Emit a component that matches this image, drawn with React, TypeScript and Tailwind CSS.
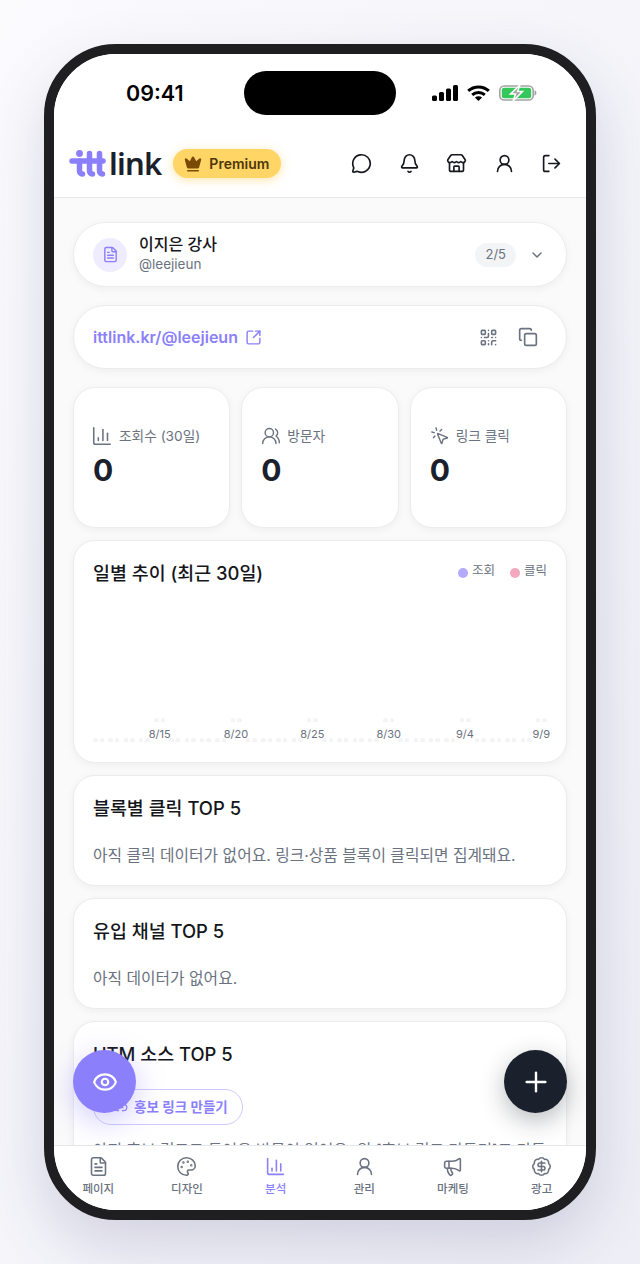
import {
  MessageCircle,
  Bell,
  Store,
  UserRound,
  LogOut,
  FileText,
  ChevronDown,
  SquareArrowOutUpRight,
  QrCode,
  Copy,
  ChartColumn,
  UsersRound,
  MousePointerClick,
  Eye,
  Plus,
  Palette,
  Megaphone,
  BadgeDollarSign,
  Crown,
  Link2,
} from "lucide-react";

const days = Array.from({ length: 30 }, (_, i) => {
  const d = new Date(2025, 7, 11 + i);
  return { label: i % 5 === 4 ? `${d.getMonth() + 1}/${d.getDate()}` : null };
});

const navItems = [
  { label: "페이지", Icon: FileText },
  { label: "디자인", Icon: Palette },
  { label: "분석", Icon: ChartColumn, active: true },
  { label: "관리", Icon: UserRound },
  { label: "마케팅", Icon: Megaphone },
  { label: "광고", Icon: BadgeDollarSign },
];

const stats = [
  { label: "조회수 (30일)", Icon: ChartColumn, iconClass: "-ml-[2px] h-[22px] w-[22px]" },
  { label: "방문자", Icon: UsersRound, iconClass: "h-[20px] w-[20px]" },
  { label: "링크 클릭", Icon: MousePointerClick, iconClass: "h-[20px] w-[20px]" },
];

const cardClass = "bg-white border border-[#ececee] shadow-[0_2px_8px_rgba(17,24,39,0.05)]";
const titleClass = "text-[18.4px] leading-[28px] font-medium text-[#14161a]";
const bodyClass = "text-[15.8px] leading-[22px] text-[#6b7280]";

function StatusIcons() {
  return (
    <div className="flex items-center gap-[9px]">
      <svg width="26" height="16" viewBox="0 0 26 16" fill="#000">
        <rect x="0" y="10.500" width="5" height="5.500" rx="1.500" />
        <rect x="7" y="7" width="5" height="9" rx="1.500" />
        <rect x="14" y="3.500" width="5" height="12.500" rx="1.500" />
        <rect x="21" y="0" width="5" height="16" rx="1.500" />
      </svg>
      <svg width="23" height="16" viewBox="0 0 23 16" fill="none" stroke="#000" strokeWidth="3">
        <path d="M1.200 5.800C7 0.600 16 0.600 21.800 5.800" />
        <path d="M5.200 9.800C8.800 6.600 14.200 6.600 17.800 9.800" />
        <path d="M11.500 16l-3.600-3.600c2-1.700 5.200-1.700 7.200 0z" fill="#000" stroke="none" />
      </svg>
      <svg width="38" height="16" viewBox="0 0 38 16" fill="none">
        <rect x="0.800" y="1" width="33.400" height="14" rx="4.500" stroke="#a3a3a3" strokeWidth="1.600" />
        <rect x="2.800" y="2.800" width="29.400" height="10.400" rx="2.500" fill="#34c759" />
        <path d="M35.500 5.500c1.300.3 1.900 1.200 1.900 2.500s-.6 2.200-1.900 2.500z" fill="#a3a3a3" />
        <path d="M21 0L11.500 9h5L14 16l9.500-9.500h-5z" fill="#a3a3a3" stroke="#fff" strokeWidth="1.500" />
      </svg>
    </div>
  );
}

function Logo() {
  return (
    <div className="flex items-center gap-[3px]">
      <svg width="37" height="27" viewBox="0 0 37 27" fill="none" stroke="#8b7ffb" strokeWidth="5.500" strokeLinecap="round" strokeLinejoin="round">
        <circle cx="10.500" cy="3.500" r="3.400" fill="#8b7ffb" stroke="none" />
        <path d="M3 11h7.500v9.500c0 2 1 3.500 3 3.500" />
        <path d="M20.500 3.500v17c0 2 1 3.500 3 3.500" />
        <path d="M30.500 3.500v17c0 2 1 3.500 3 3.500" />
        <path d="M10.500 11H34" />
      </svg>
      <span className="text-[31px] leading-none font-semibold tracking-[-0.8px] text-[#1a202c] font-['Noto_Sans','Inter',sans-serif]">link</span>
    </div>
  );
}

export default function App() {
  return (
    <div className="h-[1264px] w-[640px] overflow-hidden bg-gradient-to-br from-[#fbfbfe] to-[#eeeef6] pt-[44px] pl-[44px] font-['Inter','Noto_Sans_CJK_KR',sans-serif]">
      <div className="relative flex h-[1176px] w-[552px] flex-col overflow-hidden rounded-[72px] border-[10px] border-[#1f1f22] bg-white shadow-[0_24px_60px_rgba(60,55,110,0.18)]">
        {/* status bar */}
        <div className="relative flex h-[76px] flex-none items-start justify-between bg-white pt-[24px] pr-[49px] pl-[72px]">
          <span className="text-[21.500px] leading-[30px] font-semibold text-black">09:41</span>
          <div className="absolute top-[17px] left-[190px] h-[44px] w-[152px] rounded-full bg-black" />
          <div className="pt-[7px]">
            <StatusIcons />
          </div>
        </div>

        {/* header */}
        <header className="flex h-[68px] flex-none items-center justify-between border-b border-[#e5e7eb] bg-white pr-[24px] pl-[15px]">
          <div className="flex items-center gap-[12px]">
            <Logo />
            <div className="flex h-[29px] items-center gap-[7px] rounded-full bg-[#ffd566] pr-[12px] pl-[11px] shadow-[0_2px_10px_rgba(255,205,90,0.5)]">
              <Crown className="h-[18px] w-[18px] fill-[#7a4a06] text-[#7a4a06]" strokeWidth={2} />
              <span className="text-[14px] font-semibold text-[#4e3508]">Premium</span>
            </div>
          </div>
          <div className="flex items-center gap-[26.500px] text-[#16181d]">
            <MessageCircle className="h-[21px] w-[21px]" strokeWidth={1.900} />
            <Bell className="h-[21px] w-[21px]" strokeWidth={1.900} />
            <Store className="h-[21px] w-[21px]" strokeWidth={1.900} />
            <UserRound className="h-[21px] w-[21px]" strokeWidth={1.900} />
            <LogOut className="h-[21px] w-[21px]" strokeWidth={1.900} />
          </div>
        </header>

        {/* scrolling content */}
        <main className="flex min-h-0 flex-1 flex-col gap-[12px] overflow-hidden bg-[#fafafa] px-[19px] pt-[24px]">
          <div className={`${cardClass} mb-[6px] flex h-[65px] flex-none items-center rounded-full pr-[21px] pl-[19px]`}>
            <div className="flex h-[34px] w-[34px] flex-none items-center justify-center rounded-full bg-[#efecff]">
              <FileText className="h-[17px] w-[17px] text-[#8b7ffb]" strokeWidth={2} />
            </div>
            <div className="ml-[12px] flex min-w-0 flex-1 flex-col pb-[2px]">
              <span className="text-[16px] leading-[21px] font-medium text-[#14161a]">이지은 강사</span>
              <span className="text-[13.500px] leading-[19px] text-[#6b7280]">@leejieun</span>
            </div>
            <span className="flex h-[24px] items-center rounded-full bg-[#f3f4f6] px-[10px] text-[13px] text-[#6b7280]">2/5</span>
            <ChevronDown className="ml-[13px] h-[16px] w-[16px] text-[#6b7280]" strokeWidth={2.200} />
          </div>

          <div className={`${cardClass} mb-[6px] flex h-[64px] flex-none items-center rounded-full pr-[28px] pl-[19px]`}>
            <span className="text-[16px] font-semibold text-[#8b7ffb]">ittlink.kr/@leejieun</span>
            <SquareArrowOutUpRight className="ml-[7px] h-[17px] w-[17px] text-[#8b7ffb]" strokeWidth={2} />
            <div className="ml-auto flex items-center gap-[20px] text-[#6b7280]">
              <QrCode className="h-[19px] w-[19px]" strokeWidth={2} />
              <Copy className="h-[20px] w-[20px]" strokeWidth={2} />
            </div>
          </div>

          <div className="grid h-[141px] flex-none grid-cols-3 gap-[11px]">
            {stats.map(({ label, Icon, iconClass }) => (
              <div key={label} className={`${cardClass} flex flex-col rounded-[22px] pt-[38px] pl-[19px]`}>
                <div className="flex h-[20px] items-center gap-[6px] text-[#6b7280]">
                  <Icon className={iconClass} strokeWidth={1.700} />
                  <span className="text-[13.700px] leading-[20px]">{label}</span>
                </div>
                <span className="mt-[6px] text-[30px] leading-[36px] font-bold text-[#1a202c]">0</span>
              </div>
            ))}
          </div>

          <div className={`${cardClass} flex h-[223px] flex-none flex-col rounded-[22px] px-[19px] pt-[18px] pb-[20px]`}>
            <div className="flex items-center justify-between">
              <h3 className={titleClass}>일별 추이 (최근 30일)</h3>
              <div className="-mt-[4px] flex items-center gap-[15px] text-[12.500px] text-[#6b7280]">
                <span className="flex items-center gap-[4px]">
                  <span className="mt-[3px] h-[10px] w-[10px] rounded-full bg-[#b3aafc]" />
                  조회
                </span>
                <span className="flex items-center gap-[4px]">
                  <span className="mt-[3px] h-[10px] w-[10px] rounded-full bg-[#f3a8c0]" />
                  클릭
                </span>
              </div>
            </div>
            <div className="-mx-[2px] mt-auto flex items-end">
              {days.map((day, i) => (
                <div key={i} className="flex flex-1 flex-col items-center">
                  <div className="flex gap-[2px]">
                    <span className="h-[4px] w-[4.500px] rounded-t-full bg-[#f3f4f5]" />
                    <span className="h-[4px] w-[4.500px] rounded-t-full bg-[#f3f4f5]" />
                  </div>
                  {day.label && (
                    <span className="mt-[4px] flex h-[16px] w-0 justify-center text-[11px] leading-[16px] whitespace-nowrap text-[#6b7280]">
                      {day.label}
                    </span>
                  )}
                </div>
              ))}
            </div>
          </div>

          <div className={`${cardClass} flex h-[111px] flex-none flex-col rounded-[22px] px-[19px] pt-[18px]`}>
            <h3 className={titleClass}>블록별 클릭 TOP 5</h3>
            <p className={`mt-[23px] whitespace-nowrap ${bodyClass}`}>아직 클릭 데이터가 없어요. 링크·상품 블록이 클릭되면 집계돼요.</p>
          </div>

          <div className={`${cardClass} flex h-[111px] flex-none flex-col rounded-[22px] px-[19px] pt-[18px]`}>
            <h3 className={titleClass}>유입 채널 TOP 5</h3>
            <p className={`mt-[23px] ${bodyClass}`}>아직 데이터가 없어요.</p>
          </div>

          <div className={`${cardClass} flex h-[200px] flex-none flex-col rounded-[22px] px-[19px] pt-[18px]`}>
            <h3 className={titleClass}>UTM 소스 TOP 5</h3>
            <div className="mt-[21px] flex h-[36px] w-[150px] items-center gap-[6px] rounded-full border border-[#cfc9fd] pl-[19px]">
              <Link2 className="h-[15px] w-[15px] text-[#8b7ffb]" strokeWidth={2} />
              <span className="text-[13.500px] font-semibold text-[#8b7ffb]">홍보 링크 만들기</span>
            </div>
            <p className={`mt-[15px] whitespace-nowrap ${bodyClass}`}>아직 홍보 링크로 들어온 방문이 없어요. 위 [홍보 링크 만들기]로 만든</p>
          </div>
        </main>

        {/* bottom nav */}
        <nav className="grid h-[65px] flex-none grid-cols-6 border-t border-[#e5e7eb] bg-white pt-[10px]">
          {navItems.map(({ label, Icon, active }) => (
            <div key={label} className={`flex flex-col items-center ${active ? "text-[#8b7ffb]" : "text-[#6b7280]"}`}>
              <Icon className="h-[21px] w-[21px]" strokeWidth={1.800} />
              <span className="mt-[4px] text-[11.500px] leading-[16px] font-medium">{label}</span>
            </div>
          ))}
        </nav>

        {/* floating buttons */}
        <button className="absolute top-[996px] left-[19px] flex h-[63px] w-[63px] items-center justify-center rounded-full bg-[#8b7ffb] shadow-[0_8px_30px_rgba(139,127,251,0.4)]">
          <Eye className="h-[26px] w-[26px] text-white" strokeWidth={2} />
        </button>
        <button className="absolute top-[996px] right-[19px] flex h-[63px] w-[63px] items-center justify-center rounded-full bg-[#1a202c] shadow-[0_8px_24px_rgba(26,32,44,0.3)]">
          <Plus className="h-[32px] w-[32px] text-white" strokeWidth={1.800} />
        </button>
      </div>
    </div>
  );
}
